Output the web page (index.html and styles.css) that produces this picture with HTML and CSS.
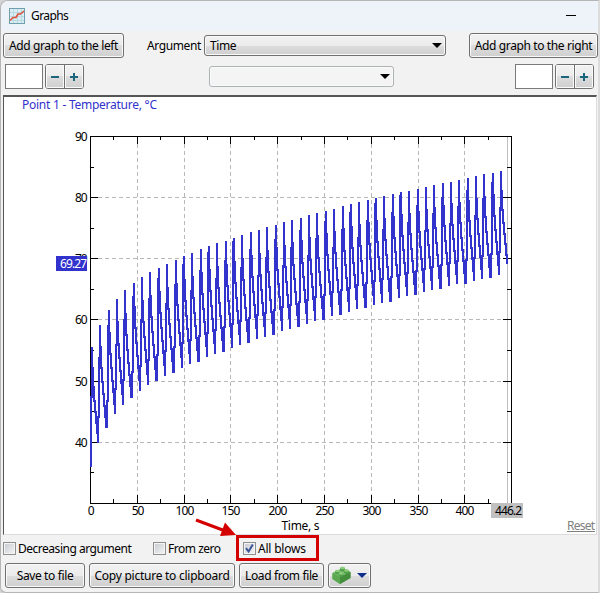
FILE: index.html
```html
<!DOCTYPE html>
<html lang="en">
<head>
    <meta charset="UTF-8">
    <meta name="viewport" content="width=device-width, initial-scale=1.0">
    <title>Graphs</title>
    <link rel="stylesheet" href="styles.css">
</head>
<body>
    <div class="window">
        <div class="title-bar">
            <svg class="title-icon" width="16" height="16" viewBox="0 0 16 16">
                <rect x="0.5" y="0.5" width="15" height="15" fill="#d9edf3" stroke="#6f9eae"/>
                <path d="M4.5 1v14M8.5 1v14M12.5 1v14M1 4.5h14M1 8.5h14M1 12.5h14" stroke="#b9dae3" fill="none"/>
                <path d="M1 12.5L4 9.500L7 9.500L9 6L11.500 6L15 3" stroke="#e0523c" stroke-width="1.6" fill="none"/>
            </svg>
            <span class="title-text">Graphs</span>
            <span class="minimize"></span>
        </div>

        <div class="toolbar">
            <button class="button add-left"><span>Add graph to the left</span></button>
            <div class="argument">
                <label>Argument</label>
                <div class="combo"><span>Time</span><i class="arrow-down"></i></div>
            </div>
            <button class="button add-right"><span>Add graph to the right</span></button>
        </div>

        <div class="scale-bar">
            <div class="stepper">
                <div class="field"></div>
                <div class="step-buttons"><button class="minus"></button><button class="plus"></button></div>
            </div>
            <div class="combo combo-disabled"><i class="arrow-down"></i></div>
            <div class="stepper">
                <div class="field"></div>
                <div class="step-buttons"><button class="minus"></button><button class="plus"></button></div>
            </div>
        </div>

        <div class="chart">
            <svg id="plot" width="592" height="437" viewBox="4 97 592 437">
                <text class="series" x="22" y="109" textLength="135">Point 1 - Temperature, °C</text>
                <g id="grid"></g>
                <path class="cursor-line" d="M507.5 137V503"/>
                <path id="ticks" class="axis"/>
                <rect class="axis" x="90.5" y="136.5" width="421" height="367"/>
                <path id="curve"/>
                <g id="labels"></g>
                <rect x="56" y="256" width="31" height="15" fill="#3232cd"/>
                <text class="value" x="60" y="268" textLength="27">69.27</text>
                <rect x="491" y="503" width="32" height="15" fill="#c0c0c0"/>
                <text x="495" y="515" textLength="27">446.2</text>
                <text x="281.500" y="530" textLength="38">Time, s</text>
                <text class="reset" x="567" y="530" textLength="28">Reset</text>
                <path d="M567 531.500H595" stroke="#808080"/>
            </svg>
        </div>

        <div class="options">
            <label class="option decreasing"><i class="box"></i><span>Decreasing argument</span></label>
            <label class="option from-zero"><i class="box"></i><span>From zero</span></label>
            <label class="option all-blows"><i class="box"><svg width="11" height="11" viewBox="0 0 11 11"><path d="M2 5.200L4.600 8.500L8.800 1.500" fill="none" stroke="#3c5599" stroke-width="2"/></svg></i><span>All blows</span></label>
        </div>

        <div class="actions">
            <button class="button save"><span>Save to file</span></button>
            <button class="button copy"><span>Copy picture to clipboard</span></button>
            <button class="button load"><span>Load from file</span></button>
            <button class="button brick">
                <svg width="19" height="19" viewBox="0 0 19 19">
                    <path d="M0.500 7L11 2L18.500 6V12L8 18L0.500 13Z" fill="#5fae55"/>
                    <path d="M0.500 7L11 2L18.500 6L8 11Z" fill="#7cc070"/>
                    <path d="M0.500 7L8 11V18L0.500 13Z" fill="#5ba851"/>
                    <path d="M8 11L18.500 6V12L8 18Z" fill="#438d3d"/>
                    <g fill="#4f9f48"><path d="M8 2v2a2.500 1.400 0 0 0 5 0V2zM3 5v2a2.500 1.400 0 0 0 5 0V5zM12 4.500v2a2.500 1.400 0 0 0 5 0v-2zM6.500 7.500v2a2.500 1.400 0 0 0 5 0v-2z"/></g>
                    <g fill="#8ccc7d"><ellipse cx="10.500" cy="2" rx="2.500" ry="1.300"/><ellipse cx="5.500" cy="5" rx="2.500" ry="1.300"/><ellipse cx="14.500" cy="4.500" rx="2.500" ry="1.300"/><ellipse cx="9" cy="7.500" rx="2.500" ry="1.300"/></g>
                </svg>
                <i class="arrow-down"></i>
            </button>
        </div>
    </div>

    <svg class="callout" width="600" height="593">
        <path d="M196 520L224 530.5" stroke="#d40000" stroke-width="3"/>
        <path d="M236 535L220 536L225 522.500Z" fill="#d40000"/>
        <rect x="237.500" y="536.500" width="80" height="23" fill="none" stroke="#d40000" stroke-width="3"/>
    </svg>

    <script src="plot.js"></script>
</body>
</html>
```
FILE: styles.css
```css
* {
    box-sizing: border-box;
}
body {
    margin: 0;
    background: #d4d4d4;
    font: 12px "Noto Sans", "Open Sans", sans-serif;
    color: #000;
    overflow: hidden;
}
.window {
    width: 600px;
    height: 593px;
    border: 1px solid #b5b5b5;
    border-right: 2px solid #dcdcdc;
    border-radius: 8px 0 0 6px;
    background: #f2f2f2;
    overflow: hidden;
}
.title-bar {
    display: flex;
    align-items: center;
    height: 30px;
    padding: 0 22px 0 8px;
    background: #eef3f9;
}
.title-icon {
    margin-top: -1px;
}
.title-text {
    margin-top: -1px;
    margin-left: 6px;
    letter-spacing: -0.6px;
}
.minimize {
    width: 10px;
    height: 1px;
    margin-top: -1px;
    margin-left: auto;
    background: #000;
}
.button {
    display: flex;
    align-items: center;
    justify-content: center;
    height: 25px;
    padding: 0;
    border: 1px solid #707070;
    border-radius: 3px;
    background: linear-gradient(#f2f2f2, #ebebeb 50%, #dddddd 50%, #cfcfcf);
    box-shadow: inset 0 0 0 1px #fafafa;
    font: inherit;
    letter-spacing: -0.38px;
    white-space: nowrap;
}
.toolbar {
    display: flex;
    justify-content: space-between;
    height: 33px;
    padding: 2px 0 0 2px;
}
.add-left {
    width: 121px;
}
.add-right {
    width: 129px;
}
.argument {
    display: flex;
    align-items: center;
    gap: 3px;
    height: 25px;
    letter-spacing: -0.4px;
}
.argument label {
    width: 54px;
}
.combo {
    display: flex;
    align-items: center;
    justify-content: space-between;
    width: 242px;
    height: 21px;
    padding: 0 3px 0 5px;
    border: 1px solid #707070;
    border-radius: 3px;
    background: linear-gradient(#f2f2f2, #ebebeb 50%, #dddddd 50%, #cfcfcf);
    box-shadow: inset 0 0 0 1px #fafafa;
}
.combo-disabled {
    justify-content: flex-end;
    width: 185px;
    margin-top: 2px;
    margin-left: 4px;
    border-color: #adb2b5;
    background: #f4f4f4;
}
.arrow-down {
    border: 5px solid transparent;
    border-top-color: #000;
    border-bottom: 0;
}
.scale-bar {
    display: flex;
    justify-content: space-between;
    height: 31px;
    padding: 0 4px;
}
.stepper {
    display: flex;
    gap: 2px;
}
.field {
    width: 38px;
    height: 25px;
    border: 1px solid #7a7a7a;
    background: #fff;
}
.step-buttons {
    display: flex;
    width: 39px;
    height: 25px;
    border: 1px solid #707070;
    border-radius: 3px;
    overflow: hidden;
}
.step-buttons button {
    flex: 1;
    padding: 0;
    border: 0;
    background: linear-gradient(#1b667d, #1b667d) center / 8px 2px no-repeat, linear-gradient(#f2f2f2, #ebebeb 50%, #dddddd 50%, #cfcfcf);
    box-shadow: inset 0 0 0 1px #fafafa;
}
.step-buttons .plus {
    border-left: 1px solid #707070;
    background: linear-gradient(#1b667d, #1b667d) center / 8px 2px no-repeat, linear-gradient(#1b667d, #1b667d) center / 2px 8px no-repeat, linear-gradient(#f2f2f2, #ebebeb 50%, #dddddd 50%, #cfcfcf);
}
.chart {
    width: 594px;
    height: 440px;
    margin-left: 2px;
    border-top: 2px solid #555;
    border-left: 1px solid #555;
    border-right: 1px solid #ddd;
    border-bottom: 1px solid #ddd;
    background: #fff;
}
.chart svg {
    display: block;
}
#plot .axis {
    fill: none;
    stroke: #000;
    shape-rendering: crispEdges;
}
#plot .series {
    fill: #3232cd;
}
#plot .value {
    fill: #fff;
}
#plot .reset {
    fill: #808080;
}
#plot .cursor-line {
    stroke: #c0c0c0;
}
#grid {
    stroke: #b8b8b8;
    stroke-dasharray: 4 3;
}
#curve {
    fill: none;
    stroke: #3232cd;
    stroke-width: 2;
    shape-rendering: crispEdges;
}
.options {
    display: flex;
    height: 28px;
    padding-left: 2px;
}
.option {
    display: flex;
    align-items: center;
    gap: 2px;
    height: 26px;
    letter-spacing: -0.48px;
}
.all-blows {
    letter-spacing: -0.2px;
}
.decreasing {
    width: 150px;
}
.from-zero {
    width: 90px;
}
.box {
    width: 13px;
    height: 13px;
    border: 1px solid #8e8f8f;
    background: linear-gradient(135deg, #c5c9d0, #f5f5f5);
    box-shadow: inset 0 0 0 1px #f4f4f4;
}
.box svg {
    display: block;
}
.actions {
    display: flex;
    gap: 4px;
    padding-left: 4px;
}
.save {
    width: 80px;
}
.copy {
    width: 146px;
    letter-spacing: -0.25px;
}
.load {
    width: 85px;
}
.brick {
    width: 43px;
    gap: 6px;
}
.brick .arrow-down {
    border-top-color: #0f2f8f;
}
.callout {
    position: absolute;
    top: 0;
    left: 0;
    pointer-events: none;
}
```
FILE: plot.js
```js
// highest and lowest position of every blow
const peaks = [347, 325, 310, 299, 290, 283, 277, 272, 268, 264, 260, 256, 253, 249, 246, 243, 241, 238, 235, 232, 230, 227, 225, 222, 220, 218, 215, 213, 211, 209, 206, 204, 202, 200, 198, 196, 194, 192, 191, 189, 187, 185, 183, 182, 180, 178, 176, 174, 173, 171];
const lows = [467, 443, 427, 414, 405, 397, 391, 385, 380, 376, 372, 368, 364, 361, 357, 354, 351, 348, 345, 342, 339, 337, 334, 331, 329, 326, 324, 321, 319, 316, 314, 312, 309, 307, 305, 303, 301, 298, 296, 294, 292, 290, 288, 286, 284, 283, 281, 279, 277, 275, 264];
const cooling = [0.42, 0.56, 0.68, 0.79, 0.9, 1];

let d = `M91 ${lows[0]}`;
peaks.forEach((top, i) => {
    const x = Math.round(92 + i * 8.35);
    const low = lows[i + 1];
    const start = lows[i];
    const shoulder = 0.58 + 0.4 * ((i * 0.35) % 1);
    if (i > 0) d += `H${x - 2}V${Math.round(start - (start - top) * 0.22)}`;
    d += `H${x - 1}V${Math.round(start - (start - top) * shoulder)}H${x}V${top}`;
    d += `V${Math.round(top + (low - top) * 0.22)}`;
    cooling.forEach((part, n) => {
        d += `H${x + n + 1}V${Math.round(top + (low - top) * part)}`;
    });
});
document.getElementById("curve").setAttribute("d", d);

let grid = "";
let ticks = "";
let labels = "";
for (let t = 0; t <= 425; t += 25) {
    const x = Math.floor(90.5 + t * 0.9362) + 0.5;
    const size = t % 50 === 0 ? 8 : 4;
    ticks += `M${x} 136v${size}M${x} 503v-${size}`;
    if (t % 50 === 0) {
        if (t > 0) grid += `<path d="M${x} 137V503"/>`;
        const w = String(t).length * 6.3;
        labels += `<text x="${x - w / 2 + 0.5}" y="515" textLength="${w}">${t}</text>`;
    }
}
for (let v = 30; v <= 90; v += 5) {
    const y = Math.floor(503.5 - (v - 30) * 6.117) + 0.5;
    const size = v % 10 === 0 ? 8 : 4;
    ticks += `M90 ${y}h${size}M511 ${y}h-${size}`;
    if (v % 10 === 0 && v > 30) {
        if (v < 90) grid += `<path d="M91 ${y}H511"/>`;
        labels += `<text x="75" y="${y + 4.5}" textLength="12.5">${v}</text>`;
    }
}
document.getElementById("grid").innerHTML = grid;
document.getElementById("ticks").setAttribute("d", ticks);
document.getElementById("labels").innerHTML = labels;
```
